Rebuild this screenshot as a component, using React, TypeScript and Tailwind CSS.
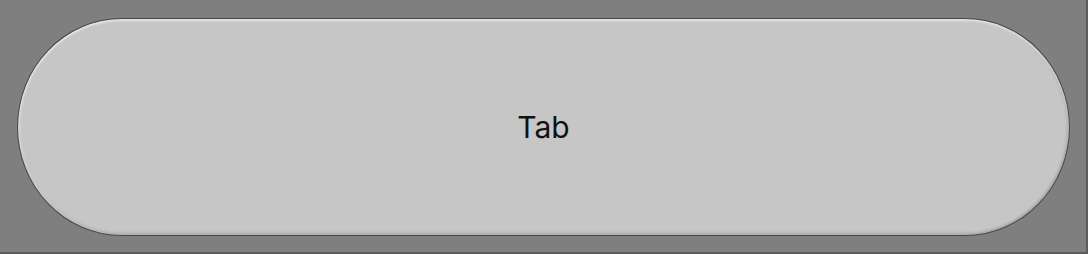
export default function App() {
  return (
    <div className="w-[1088px] h-[254px] bg-[#7f7f7f] border-r-2 border-b-2 border-[#5c5c5c] pl-[17px] pt-[18px]">
      <div
        className="w-[1053px] h-[218px] rounded-[105px/109px] border border-[#474747] bg-[#c6c6c6] flex items-center justify-center shadow-[inset_0_2px_2px_rgba(255,255,255,0.55),inset_0_-2px_3px_rgba(0,0,0,0.12),inset_2px_0_2px_rgba(255,255,255,0.35),inset_-2px_0_3px_rgba(0,0,0,0.1)]"
      >
        <span className="text-[30px] text-[#111] leading-none pb-[1px]" style={{ fontFamily: "Inter, 'Noto Sans', sans-serif" }}>
          Tab
        </span>
      </div>
    </div>
  );
}
